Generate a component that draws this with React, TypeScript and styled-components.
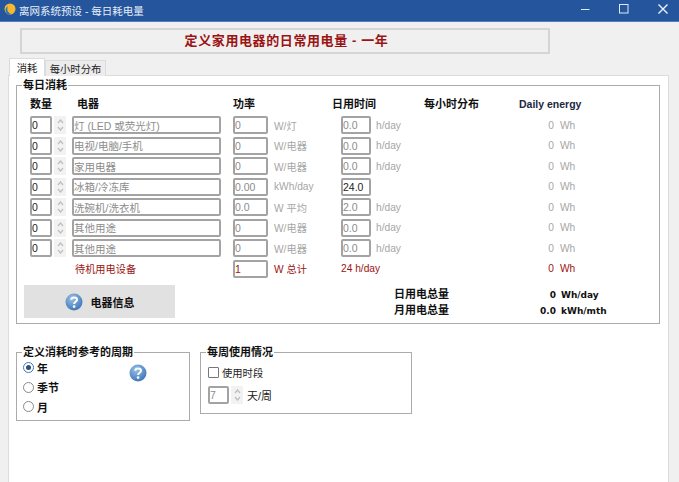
import React from "react";
import styled, { createGlobalStyle } from "styled-components";

const Global = createGlobalStyle`
  html, body { margin: 0; padding: 0; background: #f0f0f0; }
  * { box-sizing: border-box; }
`;

const FONT = `"Liberation Sans", "Noto Sans CJK SC", sans-serif`;
const BOLD = `"DejaVu Sans", "Noto Sans CJK SC", sans-serif`;

const Window = styled.div`
  width: 679px; height: 482px; overflow: hidden; background: #f0f0f0;
  display: flex; flex-direction: column; font-family: ${FONT}; font-size: 11px; color: #222;
`;
const TitleBar = styled.div`
  height: 22px; flex: none; background: #25569d; border-bottom: 1px solid #4f7fc0;
  display: flex; align-items: center; padding: 0 0 3px 4px; color: #e8eef8; font-size: 10.5px;
`;
const WindowTitle = styled.span`margin-left: 3px; flex: 1; padding-top: 2px;`;
const WinButton = styled.span`
  width: 39px; display: flex; justify-content: center; align-items: center;
  &:last-child { margin-right: -3px; }
`;
const Content = styled.div`flex: 1; display: flex; flex-direction: column; padding: 6px 10px 0 8px; min-height: 0;`;
const Banner = styled.div`
  width: 530px; height: 26px; margin-left: 12px; flex: none; padding: 0 0 4px 3px;
  border: 2px solid #d5d5d5; display: flex; align-items: center; justify-content: center;
  color: #9b1414; font-weight: 700; font-size: 13px; letter-spacing: .6px; font-family: ${FONT};
`;
const Tabs = styled.div`display: flex; margin: 4px 0 0 1px; height: 18px; flex: none; align-items: flex-end; position: relative; z-index: 1;`;
const Tab = styled.div<{ $active?: boolean }>`
  height: ${p => (p.$active ? 18 : 16)}px;
  width: ${p => (p.$active ? 36 : 61)}px;
  background: ${p => (p.$active ? "#fff" : "#ececec")};
  border: 1px solid #dcdcdc; border-bottom: none;
  display: flex; align-items: center; justify-content: center; font-size: 10.3px; color: #222;
`;
const Panel = styled.div`
  flex: 1; background: #fff; border: 1px solid #dcdcdc; border-bottom: none; margin-top: -1px;
  padding: 3px 8px 0 7px; display: flex; flex-direction: column; min-height: 0;
`;
const Group = styled.fieldset<{ $w: number; $h: number }>`
  margin: 0; padding: 0; flex: none; width: ${p => p.$w}px; height: ${p => p.$h}px;
  border: 1px solid #ababab; min-width: 0;
`;
const Legend = styled.legend`
  margin-left: 5px; padding: 0 1px; font: 700 11px/13px ${BOLD}; color: #111; height: 13px;
`;
const Head = styled.div`
  display: grid; grid-template-columns: 47px 156px 99px 92px 95px auto;
  margin: 5px 0 0 13px; height: 15px; align-items: center; font: 700 11px/15px ${BOLD}; color: #111;
`;
const HeadEn = styled.span`font: 700 10.5px/15px ${FONT}; color: #1a2740;`;
const Rows = styled.div`margin: 3px 0 0 13px; display: grid; grid-auto-rows: 20.5px;`;
const Row = styled.div`
  display: grid; align-items: center;
  grid-template-columns: 24px 18px 161px 41px 67px 35px 143px 35px auto;
`;
const Field = styled.span<{ $w?: number; $tone?: "dim" | "dark" | "red" }>`
  display: flex; align-items: center; height: 18px; white-space: nowrap;
  width: ${p => (p.$w ? `${p.$w}px` : "100%")};
  border: 2px solid #a3a3a3; border-radius: 2px; background: #fff; font-size: 10.5px; overflow: hidden;
  color: ${p => (p.$tone === "dark" ? "#222" : p.$tone === "red" ? "#9b1414" : "#8c8c8c")};
`;
const Spin = styled.span`
  width: 12px; height: 18px; background: #f2f2f2; display: flex; flex-direction: column;
  align-items: center; justify-content: space-around; padding: 2px 0;
`;
const Unit = styled.span<{ $red?: boolean }>`
  font-size: 10.2px; white-space: nowrap; color: ${p => (p.$red ? "#9b1414" : "#a6a6a6")};
`;
const StandbyName = styled(Unit)`grid-column: 3; padding-left: 3px;`;
const StandbyPower = styled(Field)`grid-column: 4;`;
const StandbyHours = styled(Unit)`grid-column: 6 / 8;`;
const Value = styled(Unit)`text-align: right; grid-column: 8;`;
const WhUnit = styled(Unit)`padding-left: 6px;`;
const Footer = styled.div`
  display: flex; margin: 6px 0 0 7px; height: 33px;
`;
const InfoButton = styled.div`
  width: 151px; height: 33px; flex: none; background: #e1e1e1; display: flex; align-items: center;
  justify-content: center; gap: 8px; font: 700 11px ${BOLD}; color: #111;
`;
const Totals = styled.div`
  margin-left: 219px; flex: none; padding-top: 2px; display: grid; grid-template-columns: 162px auto;
  grid-auto-rows: 16px; align-items: center; font: 700 11px/16px ${BOLD}; color: #111;
`;
const TotalValue = styled.span`display: flex; font-size: 9px;`;
const TotalNum = styled.span`width: 0; display: flex; justify-content: flex-end; white-space: nowrap;`;
const TotalUnit = styled.span`margin-left: 5px; white-space: nowrap;`;
const Lower = styled.div`display: flex; gap: 10px; margin-top: 22px; align-items: flex-start;`;
const Option = styled.div`
  display: flex; align-items: center; gap: 3px; height: 19.5px; padding-left: 6px; font: 700 11px ${BOLD}; color: #111;
`;
const Radios = styled.div`display: grid; grid-template-columns: 100px 30px; margin-top: -1px;`;
const RadioList = styled.div`display: flex; flex-direction: column;`;
const HelpCell = styled.div`padding-top: 6px; padding-left: 12px;`;
const Radio = styled.span<{ $on?: boolean }>`
  width: 11px; height: 11px; border-radius: 50%; display: flex; align-items: center; justify-content: center;
  border: 1px solid ${p => (p.$on ? "#3a78b8" : "#8a8a8a")}; background: #fff;
  &::after { content: ""; width: 5px; height: 5px; border-radius: 50%; background: ${p => (p.$on ? "#2f4f75" : "transparent")}; }
`;
const CheckLine = styled.div`display: flex; align-items: center; gap: 3px; margin: 6px 0 0 7px; height: 14px; font-size: 10.3px; color: #222;`;
const Check = styled.span`width: 11px; height: 11px; border: 1px solid #777; border-radius: 1px; background: #fff;`;
const SpinLine = styled.div`display: flex; align-items: center; margin: 7px 0 0 7px; height: 18px;`;
const SpinGap = styled.span`width: 2px;`;
const DaysLabel = styled.span`margin-left: 4px; font-size: 11px; color: #222;`;

const Chevron = ({ up }: { up?: boolean }) => (
  <svg width="7" height="5" viewBox="0 0 7 5">
    <path d={up ? "M1 4 L3.5 1 L6 4" : "M1 1 L3.5 4 L6 1"} fill="none" stroke="#bdbdbd" strokeWidth="1.2" />
  </svg>
);
const Spinner = () => (
  <Spin><Chevron up /><Chevron /></Spin>
);
const Help = ({ id }: { id: string }) => (
  <svg width="18" height="18" viewBox="0 0 18 18">
    <defs>
      <radialGradient id={id} cx="40%" cy="30%" r="75%">
        <stop offset="0" stopColor="#9cc0e6" />
        <stop offset="1" stopColor="#3a74b4" />
      </radialGradient>
    </defs>
    <circle cx="9" cy="9" r="8.5" fill={`url(#${id})`} />
    <path d="M6.2 6.8 C6.4 3.6 12 3.6 12 6.8 C12 8.8 9.1 8.8 9.1 11" fill="none" stroke="#fff" strokeWidth="2" />
    <circle cx="9.1" cy="13.6" r="1.3" fill="#fff" />
  </svg>
);
const Logo = () => (
  <svg width="12" height="12" viewBox="0 0 12 12">
    <circle cx="6" cy="6" r="5.5" fill="#f4b92e" />
    <path d="M4.6 11.4 C1 10 0.5 5 4 3 C2.8 6 3 9 7 11 Z" fill="#2f6fc0" />
  </svg>
);

type Item = { name: string; power: string; unit: string; hours: string; hUnit: string; tone?: boolean };
const items: Item[] = [
  { name: "灯 (LED 或荧光灯)", power: "0", unit: "W/灯", hours: "0.0", hUnit: "h/day" },
  { name: "电视/电脑/手机", power: "0", unit: "W/电器", hours: "0.0", hUnit: "h/day" },
  { name: "家用电器", power: "0", unit: "W/电器", hours: "0.0", hUnit: "h/day" },
  { name: "冰箱/冷冻库", power: "0.00", unit: "kWh/day", hours: "24.0", hUnit: "", tone: true },
  { name: "洗碗机/洗衣机", power: "0.0", unit: "W 平均", hours: "2.0", hUnit: "h/day" },
  { name: "其他用途", power: "0", unit: "W/电器", hours: "0.0", hUnit: "h/day" },
  { name: "其他用途", power: "0", unit: "W/电器", hours: "0.0", hUnit: "h/day" },
];

export default function App() {
  return (
    <Window>
      <Global />
      <TitleBar>
        <Logo />
        <WindowTitle>离网系统预设 - 每日耗电量</WindowTitle>
        <WinButton>
          <svg width="10" height="10" viewBox="0 0 10 10"><path d="M1 5.5H9.5" stroke="#dfe8f5" strokeWidth="1" /></svg>
        </WinButton>
        <WinButton>
          <svg width="10" height="10" viewBox="0 0 10 10"><rect x=".5" y=".5" width="8.5" height="8.5" fill="none" stroke="#dfe8f5" strokeWidth="1" /></svg>
        </WinButton>
        <WinButton>
          <svg width="10" height="10" viewBox="0 0 10 10"><path d="M.5 .5L9.5 9.5M9.5 .5L.5 9.5" stroke="#eef3fb" strokeWidth="1.4" /></svg>
        </WinButton>
      </TitleBar>
      <Content>
        <Banner>定义家用电器的日常用电量 - 一年</Banner>
        <Tabs>
          <Tab $active>消耗</Tab>
          <Tab>每小时分布</Tab>
        </Tabs>
        <Panel>
          <Group $w={644} $h={245}>
            <Legend>每日消耗</Legend>
            <Head>
              <span>数量</span>
              <span>电器</span>
              <span>功率</span>
              <span>日用时间</span>
              <span>每小时分布</span>
              <HeadEn>Daily energy</HeadEn>
            </Head>
            <Rows>
              {items.map((it, i) => (
                <Row key={i}>
                  <Field $w={22} $tone="dark">0</Field>
                  <Spinner />
                  <Field $w={149}>{it.name}</Field>
                  <Field $w={35}>{it.power}</Field>
                  <Unit>{it.unit}</Unit>
                  <Field $w={30} $tone={it.tone ? "dark" : "dim"}>{it.hours}</Field>
                  <Unit>{it.hUnit}</Unit>
                  <Value>0</Value>
                  <WhUnit>Wh</WhUnit>
                </Row>
              ))}
              <Row>
                <StandbyName $red>待机用电设备</StandbyName>
                <StandbyPower $w={35} $tone="red">1</StandbyPower>
                <Unit $red>W 总计</Unit>
                <StandbyHours $red>24 h/day</StandbyHours>
                <Value $red>0</Value>
                <WhUnit $red>Wh</WhUnit>
              </Row>
            </Rows>
            <Footer>
              <InfoButton><Help id="h1" />电器信息</InfoButton>
              <Totals>
                <span>日用电总量</span>
                <TotalValue><TotalNum>0</TotalNum><TotalUnit>Wh/day</TotalUnit></TotalValue>
                <span>月用电总量</span>
                <TotalValue><TotalNum>0.0</TotalNum><TotalUnit>kWh/mth</TotalUnit></TotalValue>
              </Totals>
            </Footer>
          </Group>
          <Lower>
            <Group $w={174} $h={75}>
              <Legend>定义消耗时参考的周期</Legend>
              <Radios>
                <RadioList>
                  <Option><Radio $on />年</Option>
                  <Option><Radio />季节</Option>
                  <Option><Radio />月</Option>
                </RadioList>
                <HelpCell><Help id="h2" /></HelpCell>
              </Radios>
            </Group>
            <Group $w={212} $h={68}>
              <Legend>每周使用情况</Legend>
              <CheckLine><Check />使用时段</CheckLine>
              <SpinLine>
                <Field $w={21}>7</Field>
                <SpinGap />
                <Spinner />
                <DaysLabel>天/周</DaysLabel>
              </SpinLine>
            </Group>
          </Lower>
        </Panel>
      </Content>
    </Window>
  );
}
